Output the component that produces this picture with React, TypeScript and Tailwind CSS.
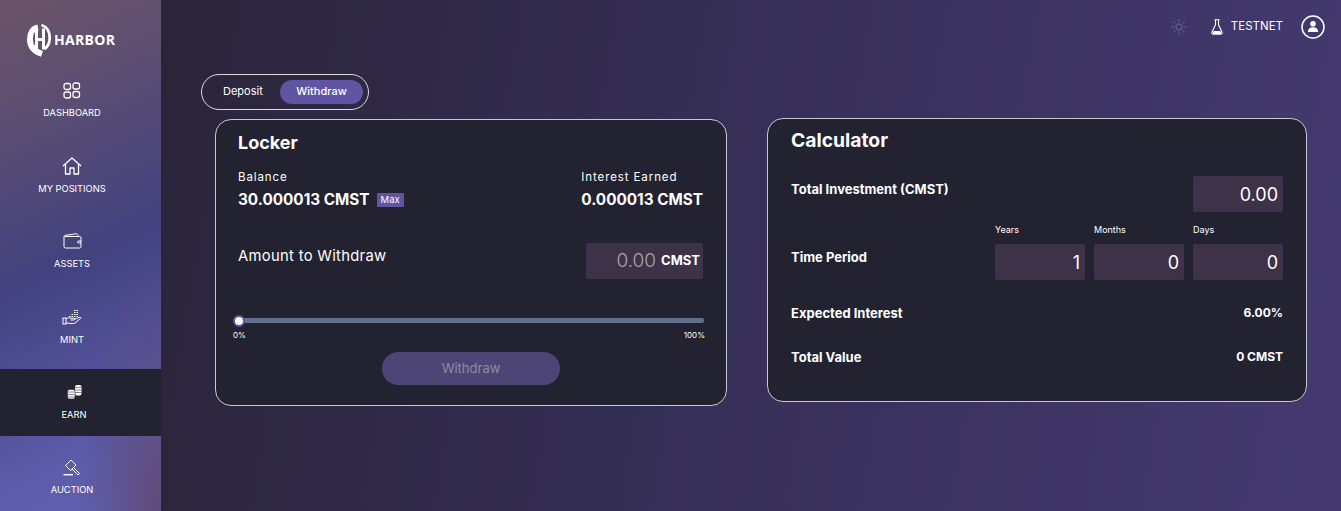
import { Sun } from "lucide-react";

const sans = "font-['Inter',sans-serif]";

function LogoIcon() {
  return (
    <svg width="24" height="33" viewBox="0 0 24 33" fill="none" stroke="#fff">
      <path d="M11 3.500C5.500 4.500 3 9.500 3 15.500 3 22.500 7.500 27.500 15 30" strokeWidth="6" />
      <path d="M14.500 1.200C20 2.500 22.700 8 22.700 14 22.700 18.500 21 22.500 17.500 25" strokeWidth="2.800" />
      <path d="M9.500 6.500V24.500M16.500 4.500V25.500M9.500 15.500h7" strokeWidth="3" />
      <path d="M7.200 8.500V21" stroke="#5e4f70" strokeWidth="0.900" />
    </svg>
  );
}

function DashboardIcon() {
  return (
    <svg width="18" height="17" viewBox="0 0 18 17" fill="none" stroke="#fff" strokeWidth="1.300">
      <rect x="1" y="1.500" width="6.500" height="6" rx="2" />
      <rect x="10" y="1" width="6.500" height="6" rx="2" />
      <rect x="1" y="10" width="6.500" height="6" rx="2" />
      <rect x="10" y="9.500" width="6.500" height="6" rx="2" />
    </svg>
  );
}

function HomeIcon() {
  return (
    <svg width="20" height="18" viewBox="0 0 20 18" fill="none" stroke="#fff" strokeWidth="1.300" strokeLinejoin="round">
      <path d="M1 9 10 1l9 8M3.500 7v10h4.500v-6h4v6h4.500V7" />
    </svg>
  );
}

function WalletIcon() {
  return (
    <svg width="19" height="16" viewBox="0 0 19 16" fill="none" stroke="#fff" strokeWidth="1">
      <path d="M1.500 3.500h15a1.500 1.500 0 0 1 1.500 1.500v8.500a1.500 1.500 0 0 1-1.500 1.500h-14A1.500 1.500 0 0 1 1 13.500V4c0-1 .5-1.500 1.500-1.700L13 .8c1-.2 2 .5 2 1.500v1.200" />
      <path d="M18 8h-2.500a1 1 0 0 0 0 2H18" />
    </svg>
  );
}

function MintIcon() {
  return (
    <svg width="20" height="16" viewBox="0 0 20 16" fill="none" stroke="#fff" strokeWidth="1">
      <rect x="1" y="9" width="3" height="6" />
      <path d="M4 10c2-1.500 3.500-1.500 5-.8h3c1 0 1 1.800 0 1.800H8.500M12 10.500l5.500-2.300c1.200-.4 1.800.8.800 1.500L13 14c-1 .6-2 .7-3 .5l-6-.5" />
      <path d="M7 7.500h1.500M9.500 7.500H11M12 7.500h1.500M14.500 7.500H16M9.500 5.500H11M12 5.500h1.500M14.500 5.500H16M12 3.500h1.500M14.500 3.500H16M12 1.500h1.500M14.500 1.500H16" strokeWidth="1.100" />
    </svg>
  );
}

function CoinsIcon() {
  return (
    <svg width="15" height="14" viewBox="0 0 15 14">
      <rect x="8" y="0" width="6.500" height="10.500" rx="2" fill="#fff" />
      <path d="M8 2.500h6.500M8 5h6.500M8 7.500h6.500" stroke="#77767f" strokeWidth="0.900" />
      <rect x="0.500" y="4.500" width="7.500" height="9.500" rx="2" fill="#fff" stroke="#232230" strokeWidth="0.600" />
      <path d="M1 7h6.500M1 9.500h6.500M1 12h6.500" stroke="#77767f" strokeWidth="0.900" />
    </svg>
  );
}

function GavelIcon() {
  return (
    <svg width="18" height="17" viewBox="0 0 18 17" fill="none" stroke="#fff" strokeWidth="1" strokeLinejoin="round">
      <path d="m2.500 6.500 5.500-5.500 5 5-5.500 5.500Z" />
      <path d="m10.500 8.500 6 6-1.500 1.500-6-6" />
      <path d="M.5 15.700h9.500" strokeWidth="1.400" />
    </svg>
  );
}

function FlaskIcon() {
  return (
    <svg width="12" height="16" viewBox="0 0 12 16" fill="none" stroke="#fff" strokeWidth="1.100" strokeLinejoin="round">
      <path d="M3.500.8h5M4.500.8v5L1 13c-.5 1 .2 2.200 1.300 2.200h7.400C10.800 15.200 11.500 14 11 13L7.500 5.800v-5" />
      <path d="M2.600 12h6.800l1 2.200-.6.800H2.200l-.6-.8Z" fill="#fff" stroke="none" />
    </svg>
  );
}

function UserCircleIcon() {
  return (
    <svg width="24" height="24" viewBox="0 0 24 24" fill="none">
      <circle cx="12" cy="12" r="11" stroke="#fff" strokeWidth="1.500" />
      <circle cx="12" cy="8.800" r="2.800" fill="#fff" />
      <path d="M6.800 17c0-3 2-4.800 5.200-4.800s5.200 1.800 5.200 4.800Z" fill="#fff" />
    </svg>
  );
}

const navItems = [
  { label: "DASHBOARD", icon: <DashboardIcon /> },
  { label: "MY POSITIONS", icon: <HomeIcon /> },
  { label: "ASSETS", icon: <WalletIcon /> },
  { label: "MINT", icon: <MintIcon /> },
  { label: "EARN", icon: <CoinsIcon />, active: true },
  { label: "AUCTION", icon: <GavelIcon /> },
];

function Sidebar() {
  return (
    <aside className="w-[161px] shrink-0 h-[511px] overflow-hidden flex flex-col bg-[radial-gradient(ellipse_at_100%_100%,#604a78_0%,rgba(96,74,120,0)_35%),linear-gradient(155deg,#6b5468_0%,#5e4f70_18%,#43427f_50%,#5c5cab_85%,#6060ae_100%)]">
      <div className="h-[67.400px] shrink-0 pt-[24px] pl-[27px] flex items-start gap-[3px]">
        <LogoIcon />
        <span className="text-white text-[14px] leading-[19px] font-bold tracking-[0.3px] mt-[6px] font-['Open_Sans',sans-serif]">HARBOR</span>
      </div>
      {navItems.map((item) => (
        <div
          key={item.label}
          className={`h-[67px] shrink-0 mb-[8.400px] flex flex-col items-center justify-center gap-[8px] pb-[1px] text-white ${item.active ? "bg-[#232230] pr-[13px]" : "pr-[17px]"}`}
        >
          <div className="h-[18px] flex items-center justify-center">{item.icon}</div>
          <span className="text-[9.300px] leading-[12px]">{item.label}</span>
        </div>
      ))}
    </aside>
  );
}

function Field({ value, className }: { value: string; className: string }) {
  return (
    <div className={`h-[36px] bg-[#3e3249] rounded-[2px] flex items-center justify-end pr-[5px] text-white text-[18px] ${className}`}>
      {value}
    </div>
  );
}

function LockerCard() {
  return (
    <section className="w-[512px] h-[287px] bg-[#232230] border border-[#c9c7cf] rounded-[16px] pt-[9px] px-[22px] flex flex-col text-white">
      <h2 className="text-[18px] leading-[27px] font-bold">Locker</h2>
      <div className="mt-[13px] mr-[1px] flex justify-between">
        <div>
          <p className="text-[11.500px] leading-[16px] tracking-[0.9px]">Balance</p>
          <div className="mt-[4px] flex items-center gap-[7px]">
            <span className="text-[15.300px] leading-[22px] font-bold">30.000013 CMST</span>
            <span className="bg-[#6055a3] rounded-[1px] px-[4px] text-[9.500px] leading-[14px]">Max</span>
          </div>
        </div>
        <div>
          <p className="text-[11.500px] leading-[16px] tracking-[0.9px]">Interest Earned</p>
          <p className="mt-[4px] text-[15.300px] leading-[22px] font-bold">0.000013 CMST</p>
        </div>
      </div>
      <div className="mt-[32px] mr-[1px] flex justify-between items-center">
        <span className="text-[14.800px] tracking-[0.3px] -mt-[10px]">Amount to Withdraw</span>
        <div className="w-[117px] h-[36px] bg-[#3e3249] rounded-[2px] flex items-center justify-end pr-[3px] gap-[5px]">
          <span className="text-[#a5a2a8] text-[19px] font-light">0.00</span>
          <span className="text-[13px] font-bold">CMST</span>
        </div>
      </div>
      <div className="mt-[39px] ml-[-5px] relative h-[5px] bg-[#5f7088] rounded-[2px]">
        <div className="absolute left-0 top-[-3.500px] w-[12px] h-[12px] rounded-full bg-white border-2 border-[#5b4fa5]" />
      </div>
      <div className="mt-[6px] ml-[-5px] mr-[-1px] flex justify-between text-[8px] leading-[12px]">
        <span>0%</span>
        <span>100%</span>
      </div>
      <button className="self-center mt-[11px] w-[178px] h-[33px] bg-[#4e4577] rounded-full text-[#8f8c9f] text-[13px]">
        Withdraw
      </button>
    </section>
  );
}

function CalculatorRow({ label, value }: { label: string; value: string }) {
  return (
    <div className="flex justify-between items-center leading-[18px]">
      <span className="text-[13px] font-bold">{label}</span>
      <span className="text-[12px] font-bold">{value}</span>
    </div>
  );
}

function CalculatorCard() {
  return (
    <section className="w-[540px] h-[284px] -mt-px bg-[#232230] border border-[#c9c7cf] rounded-[16px] pt-[8px] px-[23px] flex flex-col text-white">
      <h2 className="text-[19.300px] leading-[27px] font-bold">Calculator</h2>
      <div className="mt-[22px] flex justify-between">
        <span className="text-[13px] font-bold leading-[18px] mt-[4px]">Total Investment (CMST)</span>
        <Field value="0.00" className="w-[90px]" />
      </div>
      <div className="mt-[12px] flex justify-between">
        <span className="text-[13px] font-bold leading-[18px] mt-[24px]">Time Period</span>
        <div className="flex gap-[9px]">
          {[
            ["Years", "1"],
            ["Months", "0"],
            ["Days", "0"],
          ].map(([label, value]) => (
            <div key={label} className="w-[90px]">
              <p className="text-[9px] leading-[14px] mb-[6px] -mt-[1px]">{label}</p>
              <Field value={value} className="w-[90px] mt-[7px]" />
            </div>
          ))}
        </div>
      </div>
      <div className="mt-[24px] flex flex-col gap-[26px]">
        <CalculatorRow label="Expected Interest" value="6.00%" />
        <CalculatorRow label="Total Value" value="0 CMST" />
      </div>
    </section>
  );
}

export default function App() {
  return (
    <div className={`${sans} w-[1341px] h-[511px] overflow-hidden flex bg-[linear-gradient(100deg,#2a2539_12%,#352e55_50%,#443a71_100%)]`}>
      <Sidebar />
      <main className="flex-1 flex flex-col">
        <header className="h-[74px] pt-[15px] pr-[16px] flex justify-end items-start text-white">
          <div className="h-[24px] flex items-center">
            <Sun size={18} className="text-[#5d5780] mr-[23px]" />
            <FlaskIcon />
            <span className="ml-[8px] mr-[18px] text-[11.500px]">TESTNET</span>
            <UserCircleIcon />
          </div>
        </header>
        <div className="ml-[40px] w-[168px] h-[36px] rounded-full border border-[#dcdbe0] flex items-center justify-between pl-[5px] pr-[5px] text-white text-[11px]">
          <span className="px-[16px] pb-[2px]">Deposit</span>
          <span className="w-[83px] h-[24px] rounded-full bg-[#6055a3] font-medium flex items-center justify-center pb-[2px]">Withdraw</span>
        </div>
        <div className="mt-[9px] ml-[54px] flex gap-[40px] items-start">
          <LockerCard />
          <CalculatorCard />
        </div>
      </main>
    </div>
  );
}
